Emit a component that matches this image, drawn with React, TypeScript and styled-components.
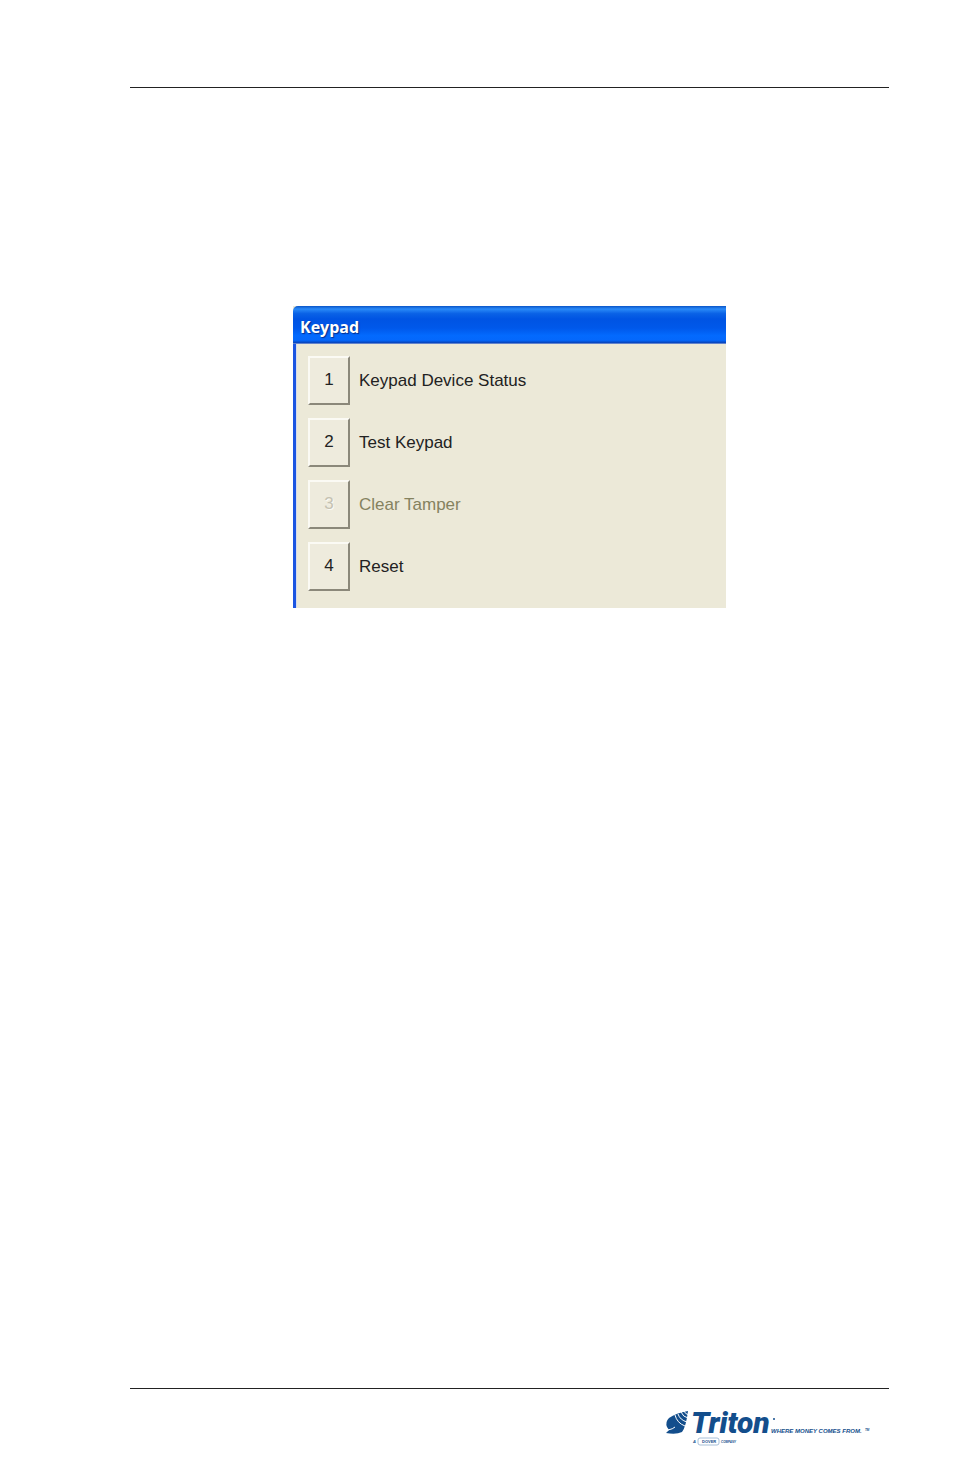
import React from 'react';
import styled, { createGlobalStyle } from 'styled-components';

const GlobalStyle = createGlobalStyle`
  *, *::before, *::after { box-sizing: border-box; }
  body {
    margin: 0;
    background: #fff;
    font-family: "Liberation Sans", Arial, sans-serif;
  }
`;

const Page = styled.div`
  display: flex;
  flex-direction: column;
  min-height: 100vh;
  padding: 87px 65px 28px 130px;
`;

const Main = styled.main`
  flex: 1;
  display: flex;
  flex-direction: column;
  align-items: center;
  padding-top: 218px;
  border-top: 1px solid #222;
`;

const Panel = styled.section`
  width: 433px;
  max-width: 100%;
  background: #ece9d8;
`;

const TitleBar = styled.h1`
  display: flex;
  align-items: center;
  height: 38px;
  margin: 0;
  padding: 4px 7px 0;
  color: #fff;
  font: bold 16px/24px "Open Sans", "Noto Sans", sans-serif;
  text-shadow: 1px 1px 1px #06308c;
  background: linear-gradient(
    #0a55c8 0,
    #2a8af8 8%,
    #0a62e6 20%,
    #0054e3 34%,
    #0058ea 58%,
    #036afe 78%,
    #0468fc 90%,
    #0842b8 97%,
    #a9b6dc 100%
  );
  border-top-left-radius: 5px;
`;

const Options = styled.ul`
  display: flex;
  flex-direction: column;
  gap: 13px;
  margin: 0;
  padding: 12px 12px 17px;
  list-style: none;
  border-left: 3px solid #1b55e2;
  box-shadow: inset 1px 0 #d5dcec;
`;

const Option = styled.li`
  display: flex;
  align-items: center;
  gap: 9px;
`;

const KeyButton = styled.button`
  width: 42px;
  height: 49px;
  padding: 0 0 2px;
  color: #222;
  background: #eeebdd;
  border: 2px solid;
  border-color: #fbfaf4 #8b887a #8b887a #fbfaf4;
  font: 17px/20px "Liberation Sans", Arial, sans-serif;

  &:disabled {
    color: #c5c2b2;
    text-shadow: 1px 1px #fbfaf4;
  }
`;

const OptionLabel = styled.label<{ $muted: boolean }>`
  color: ${({ $muted }) => ($muted ? '#85825f' : '#222')};
  font-size: 17px;
  line-height: 20px;
`;

const Footer = styled.footer`
  display: flex;
  justify-content: flex-end;
  padding: 12px 18px 0 0;
  border-top: 1px solid #222;
`;

const Logo = styled.svg`
  display: block;
  fill: #134e8c;
  font-family: "Liberation Sans", Arial, sans-serif;
  font-style: italic;
  font-weight: 900;
`;

const Wordmark = styled.text`
  font-family: Roboto, "Liberation Sans", sans-serif;
  font-size: 30px;
`;

const options = [
  { key: '1', label: 'Keypad Device Status', disabled: false },
  { key: '2', label: 'Test Keypad', disabled: false },
  { key: '3', label: 'Clear Tamper', disabled: true },
  { key: '4', label: 'Reset', disabled: false },
];

function TritonLogo() {
  return (
    <Logo width="206" height="46" viewBox="0 -8 206 46" role="img" aria-label="Triton. Where money comes from. A Dover company">
      <path d="M23 2 Q11 4 4 9 Q0 13 2 18 L4 21 L1 24 Q11 26 17 23 Q21 18 23 2Z" />
      <g fill="none" stroke="#fff" strokeWidth="1">
        <path d="M10 6 Q12 14 20 17" />
        <path d="M13 5 Q15 11 22 13" />
        <path d="M16 3 Q18 8 23 9" />
        <path d="M19 2 Q20 5 24 6" />
        <path d="M3 21 Q8 20 10 18" />
      </g>
      <Wordmark x="26" y="24">Triton</Wordmark>
      <circle cx="109" cy="10" r="1" />
      <text x="106" y="24" fontSize="6">WHERE MONEY COMES FROM.</text>
      <text x="200" y="22" fontSize="3">TM</text>
      <text x="28" y="34" fontSize="4">A</text>
      <rect x="33" y="29" width="21" height="7" rx="2" fill="none" stroke="#a8c0d8" />
      <text x="37" y="34" fontSize="4" fontStyle="normal">DOVER</text>
      <text x="56" y="34" fontSize="3">COMPANY</text>
    </Logo>
  );
}

export default function App() {
  return (
    <>
      <GlobalStyle />
      <Page>
        <Main>
          <Panel aria-labelledby="panel-title">
            <TitleBar id="panel-title">Keypad</TitleBar>
            <Options>
              {options.map(({ key, label, disabled }) => (
                <Option key={key}>
                  <KeyButton id={`key-${key}`} type="button" disabled={disabled}>
                    {key}
                  </KeyButton>
                  <OptionLabel htmlFor={`key-${key}`} $muted={disabled}>
                    {label}
                  </OptionLabel>
                </Option>
              ))}
            </Options>
          </Panel>
        </Main>
        <Footer>
          <TritonLogo />
        </Footer>
      </Page>
    </>
  );
}
